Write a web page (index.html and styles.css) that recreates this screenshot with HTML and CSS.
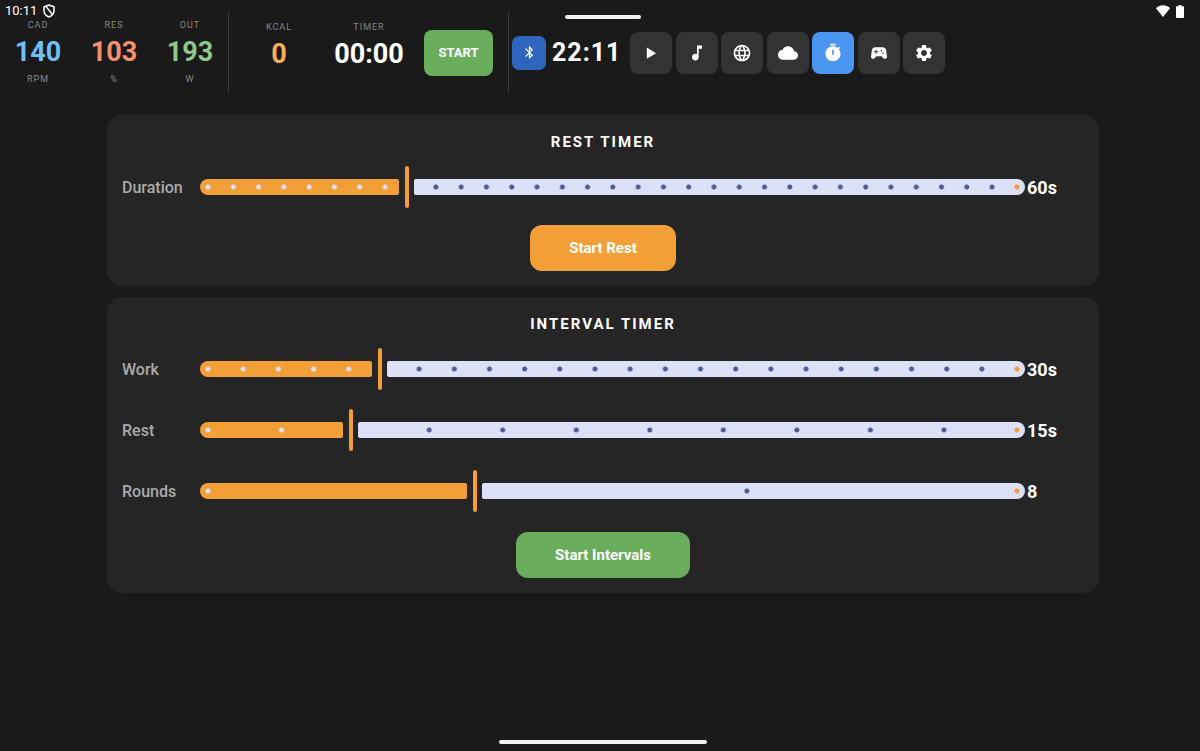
FILE: index.html
```
<!DOCTYPE html>
<html lang="en">
<head>
	<meta charset="UTF-8">
	<meta name="viewport" content="width=device-width, initial-scale=1">
	<title>Timers</title>
	<link rel="stylesheet" href="styles.css">
</head>
<body>
	<div class="status">
		<span class="status-left">
			10:11
			<svg width="12" height="14" viewBox="0 0 12 14" fill="none" stroke="#fff" stroke-width="1.5"><path d="M6 1L11 2.8V6.6C11 9.8 8.8 12 6 13C3.2 12 1 9.8 1 6.6V2.8Z"/><path d="M3 2.500L9.500 10.500"/></svg>
		</span>
		<span class="status-right">
			<svg width="14" height="12" viewBox="0 0 14 12" fill="#fff"><path d="M0 3.2C4-.6 10-.6 14 3.2L7 12Z"/></svg>
			<svg width="8" height="13" viewBox="0 0 8 13" fill="#fff"><path d="M2.5 0H5.500V1.300H7.200Q8 1.300 8 2.100V12.200Q8 13 7.200 13H.8Q0 13 0 12.200V2.100Q0 1.300 .8 1.300H2.500Z"/></svg>
		</span>
	</div>
	<div class="handle"></div>

	<header class="topbar">
		<div class="stats">
			<div class="stat cad"><span class="name">CAD</span><b>140</b><span class="name">RPM</span></div>
			<div class="stat res"><span class="name">RES</span><b>103</b><span class="name">%</span></div>
			<div class="stat out"><span class="name">OUT</span><b>193</b><span class="name">W</span></div>
		</div>
		<div class="session">
			<div class="stat kcal"><span class="name">KCAL</span><b>0</b></div>
			<div class="stat timer"><span class="name">TIMER</span><b>00:00</b></div>
			<button class="start" type="button">START</button>
		</div>
		<div class="tools">
			<button class="bluetooth" type="button" aria-label="Bluetooth">
				<svg width="15" height="15" viewBox="0 0 24 24" fill="#fff"><path d="M17.710 7.710L12 2h-1v7.590L6.410 5 5 6.410 10.590 12 5 17.590 6.410 19 11 14.410V22h1l5.710-5.710-4.300-4.290zM13 5.830l1.880 1.880L13 9.590zm1.880 10.460L13 18.170v-3.760z"/></svg>
			</button>
			<time class="clock">22:11</time>
			<nav class="apps">
				<button type="button" aria-label="Video">
					<svg width="20" height="20" viewBox="0 0 24 24" fill="#fff"><path d="M7 5.500v13.500L18 12.200z"/></svg>
				</button>
				<button type="button" aria-label="Music">
					<svg width="20" height="20" viewBox="0 0 24 24" fill="#fff"><path d="M12 3v10.550c-.59-.34-1.270-.55-2-.55-2.210 0-4 1.790-4 4s1.790 4 4 4 4-1.790 4-4V7h4V3z"/></svg>
				</button>
				<button type="button" aria-label="Web">
					<svg width="20" height="20" viewBox="0 0 24 24" fill="#fff"><path d="M11.990 2C6.470 2 2 6.480 2 12s4.470 10 9.990 10C17.520 22 22 17.520 22 12S17.520 2 11.990 2zm6.930 6h-2.950c-.32-1.250-.78-2.450-1.380-3.560 1.840.63 3.370 1.910 4.330 3.560zM12 4.040c.83 1.200 1.480 2.530 1.910 3.960h-3.820c.43-1.430 1.080-2.760 1.910-3.960zM4.260 14C4.100 13.360 4 12.690 4 12s.1-1.360.26-2h3.380c-.08.66-.14 1.320-.14 2s.06 1.340.14 2H4.260zm.82 2h2.950c.32 1.250.78 2.450 1.380 3.560-1.840-.63-3.370-1.900-4.330-3.560zm2.950-8H5.080c.96-1.660 2.490-2.930 4.330-3.560C8.810 5.550 8.350 6.750 8.030 8zM12 19.960c-.83-1.200-1.480-2.530-1.910-3.960h3.820c-.43 1.430-1.080 2.760-1.910 3.960zM14.340 14H9.660c-.09-.66-.16-1.320-.16-2s.07-1.350.16-2h4.680c.09.65.16 1.320.16 2s-.07 1.340-.16 2zm.25 5.560c.6-1.110 1.060-2.310 1.380-3.560h2.950c-.96 1.650-2.490 2.930-4.330 3.560zM16.360 14c.08-.66.14-1.320.14-2s-.06-1.340-.14-2h3.380c.16.64.26 1.310.26 2s-.1 1.360-.26 2h-3.380z"/></svg>
				</button>
				<button type="button" aria-label="Cloud">
					<svg width="20" height="20" viewBox="0 0 24 24" fill="#fff"><path d="M19.350 10.040C18.670 6.590 15.640 4 12 4 9.110 4 6.600 5.640 5.350 8.040 2.340 8.360 0 10.910 0 14c0 3.310 2.690 6 6 6h13c2.760 0 5-2.240 5-5 0-2.640-2.050-4.780-4.650-4.960z"/></svg>
				</button>
				<button class="current" type="button" aria-label="Timers" aria-current="page">
					<svg width="20" height="20" viewBox="0 0 24 24" fill="#fff"><path d="M9 1h6v2H9zM19.030 7.390l1.420-1.420c-.43-.51-.9-.99-1.410-1.410l-1.420 1.420C16.070 4.740 14.120 4 12 4c-4.970 0-9 4.030-9 9s4.020 9 9 9 9-4.030 9-9c0-2.120-.74-4.070-1.970-5.610zM13 14h-2V8h2z"/></svg>
				</button>
				<button type="button" aria-label="Games">
					<svg width="20" height="20" viewBox="0 0 24 24" fill="#fff"><path d="M21.580 16.090l-1.090-7.660C20.210 6.460 18.520 5 16.530 5H7.470C5.480 5 3.790 6.460 3.510 8.430l-1.090 7.660C2.200 17.630 3.390 19 4.940 19c.68 0 1.320-.27 1.800-.75L9 16h6l2.250 2.250c.48.48 1.130.75 1.800.75 1.560 0 2.750-1.370 2.530-2.910zM11 11H9v2H8v-2H6v-1h2V8h1v2h2zm4-1c-.55 0-1-.45-1-1s.45-1 1-1 1 .45 1 1-.45 1-1 1zm2 3c-.55 0-1-.45-1-1s.45-1 1-1 1 .45 1 1-.45 1-1 1z"/></svg>
				</button>
				<button type="button" aria-label="Settings">
					<svg width="20" height="20" viewBox="0 0 24 24" fill="#fff"><path d="M19.140 12.940c.04-.3.060-.61.060-.94 0-.32-.02-.64-.07-.94l2.030-1.580c.18-.14.23-.41.12-.61l-1.920-3.320c-.12-.22-.37-.29-.59-.22l-2.390.96c-.5-.38-1.030-.7-1.620-.94l-.36-2.540c-.04-.24-.24-.41-.48-.41h-3.840c-.24 0-.43.17-.47.41l-.36 2.540c-.59.24-1.130.57-1.620.94l-2.390-.96c-.22-.08-.47 0-.59.22L2.740 8.870c-.12.21-.08.47.12.61l2.030 1.580c-.05.3-.09.63-.09.94s.02.64.07.94l-2.030 1.580c-.18.14-.23.41-.12.61l1.920 3.320c.12.22.37.29.59.22l2.390-.96c.5.38 1.030.7 1.620.94l.36 2.540c.05.24.24.41.48.41h3.840c.24 0 .44-.17.47-.41l.36-2.540c.59-.24 1.130-.56 1.620-.94l2.390.96c.22.08.47 0 .59-.22l1.920-3.320c.12-.22.070-.47-.12-.61l-2.010-1.580zM12 15.600c-1.980 0-3.600-1.620-3.600-3.600s1.620-3.600 3.600-3.600 3.600 1.620 3.600 3.600-1.620 3.600-3.600 3.600z"/></svg>
				</button>
			</nav>
		</div>
	</header>

	<main>
		<form class="card">
			<h2>REST TIMER</h2>
			<div class="row">
				<label for="duration">Duration</label>
				<div class="slider" style="--value: 0.2455; --steps: 32">
					<div class="track"><span class="fill"></span><span class="remain"></span></div>
					<input type="range" id="duration" min="0" max="10000" value="2455" aria-valuetext="60s">
				</div>
				<output for="duration">60s</output>
			</div>
			<button class="action orange" type="button">Start Rest</button>
		</form>

		<form class="card">
			<h2>INTERVAL TIMER</h2>
			<div class="rows">
				<div class="row">
					<label for="work">Work</label>
					<div class="slider" style="--value: 0.2125; --steps: 23">
						<div class="track"><span class="fill"></span><span class="remain"></span></div>
						<input type="range" id="work" min="0" max="10000" value="2125" aria-valuetext="30s">
					</div>
					<output for="work">30s</output>
				</div>
				<div class="row">
					<label for="rest">Rest</label>
					<div class="slider" style="--value: 0.1762; --steps: 11">
						<div class="track"><span class="fill"></span><span class="remain"></span></div>
						<input type="range" id="rest" min="0" max="10000" value="1762" aria-valuetext="15s">
					</div>
					<output for="rest">15s</output>
				</div>
				<div class="row">
					<label for="rounds">Rounds</label>
					<div class="slider" style="--value: 0.3306; --steps: 3">
						<div class="track"><span class="fill"></span><span class="remain"></span></div>
						<input type="range" id="rounds" min="0" max="10000" value="3306" aria-valuetext="8">
					</div>
					<output for="rounds">8</output>
				</div>
			</div>
			<button class="action green" type="button">Start Intervals</button>
		</form>
	</main>

	<div class="bottom">
		<div class="homebar"></div>
	</div>

	<script type="text/javascript">
		// keep the coloured track in step with the thumb
		var sliders = document.querySelectorAll(".slider input");
		for (var i = 0; i < sliders.length; i++) {
			sliders[i].addEventListener("input", function() {
				this.parentNode.style.setProperty("--value", this.value / this.max);
			});
		}
	</script>
</body>
</html>
```
FILE: styles.css
```
* {
	box-sizing: border-box;
}
html, body {
	margin: 0;
	padding: 0;
}
body {
	position: relative;
	min-height: 100vh;
	display: flex;
	flex-direction: column;
	background: #1a1a1a;
	color: #fff;
	font-family: Roboto, "Liberation Sans", sans-serif;
}
button {
	border: 0;
	padding: 0;
	color: #fff;
	font-family: inherit;
	cursor: pointer;
}
svg {
	display: block;
}

/* system overlays */
.status {
	position: absolute;
	top: 3px;
	left: 5px;
	right: 16px;
	display: flex;
	justify-content: space-between;
	font-size: 13px;
	line-height: 16px;
}
.status-left, .status-right {
	display: flex;
	align-items: center;
	gap: 6px;
}
.handle {
	position: absolute;
	top: 15px;
	left: calc(50% - 35px);
	width: 76px;
	height: 4px;
	border-radius: 2px;
	background: #f1f1f1;
}
.bottom {
	margin-top: auto;
	padding: 0 101px 7px 107px;
}
.homebar {
	width: 208px;
	height: 4px;
	margin: 0 auto;
	border-radius: 2px;
	background: #f1f1f1;
}

/* top bar */
.topbar {
	display: flex;
	padding: 12px 0 22px;
}
.stats, .session, .tools {
	display: flex;
}
.stats, .session {
	height: 81px;
	border-right: 1px solid #3a3a3a;
}
.stat {
	width: 76px;
	padding-top: 7px;
	display: flex;
	flex-direction: column;
	align-items: center;
	gap: 5px;
}
.stat .name {
	color: #888;
	font-size: 9px;
	line-height: 12px;
	letter-spacing: 1px;
}
.stat b {
	font-size: 27px;
	line-height: 32px;
}
.cad b {
	color: #6fc0f5;
}
.res b {
	color: #f5906c;
}
.out b {
	color: #8fc98a;
}
.kcal b {
	color: #f7b055;
}
.session {
	padding: 0 15px 0 12px;
}
.session .stat {
	padding-top: 9px;
}
.session .timer {
	width: 104px;
}
.start {
	align-self: center;
	width: 69px;
	height: 46px;
	margin-left: 3px;
	border-radius: 8px;
	background: #69ad5d;
	font-size: 13px;
	font-weight: 700;
}
.tools {
	align-items: center;
	padding-left: 3px;
}
.bluetooth {
	display: grid;
	place-items: center;
	width: 34px;
	height: 34px;
	border-radius: 7px;
	background: #2f65bd;
}
.clock {
	width: 84px;
	padding-left: 6px;
	font-size: 25px;
	font-weight: 700;
	line-height: 32px;
	letter-spacing: 1px;
}
.apps {
	display: flex;
	justify-content: space-between;
	width: 315px;
}
.apps button {
	display: grid;
	place-items: center;
	width: 42px;
	height: 42px;
	border-radius: 8px;
	background: #333;
}
.apps .current {
	background: #4a96f0;
}

/* timer cards */
main {
	display: flex;
	flex-direction: column;
	gap: 11px;
	padding: 0 101px 0 107px;
}
.card {
	display: flex;
	flex-direction: column;
	align-items: center;
	padding: 15px;
	border-radius: 15px;
	background: #252525;
}
.card h2 {
	margin: 0 0 10px;
	font-size: 15px;
	font-weight: 700;
	line-height: 24px;
	letter-spacing: 2px;
}
.rows {
	display: flex;
	flex-direction: column;
	gap: 15px;
	width: 100%;
	margin-bottom: 3px;
}
.row {
	display: grid;
	grid-template-columns: 76px 1fr 57px;
	column-gap: 2px;
	align-items: center;
	width: 100%;
	height: 46px;
}
.row label {
	color: #aaa;
	font-size: 16px;
	font-weight: 500;
}
.row output {
	font-size: 18px;
	font-weight: 700;
}
.slider {
	container-type: inline-size;
	display: grid;
	align-items: center;
}
.track, .slider input {
	grid-area: 1 / 1;
}
.track {
	--step: calc((100cqw - 16px) / var(--steps));
	display: flex;
	gap: 15px;
	height: 16px;
}
.fill {
	width: calc((100cqw - 16px) * var(--value));
	border-radius: 8px 2px 2px 8px;
	background: radial-gradient(circle at 8px 8px, #dde1f7 2px, transparent 3px) 0 0 / var(--step) 16px #f39f38;
}
.remain {
	flex: 1;
	border-radius: 2px 8px 8px 2px;
	background:
		radial-gradient(circle at 8px 8px, #f39f38 2px, transparent 3px) right / 16px 16px no-repeat,
		linear-gradient(#dde1f7, #dde1f7) right / 16px 16px no-repeat,
		radial-gradient(circle at calc(100% - 8px) 8px, #4d5b9b 2px, transparent 3px) right / var(--step) 16px #dde1f7;
}
.slider input {
	-webkit-appearance: none;
	appearance: none;
	width: 100%;
	height: 42px;
	margin: 0;
	background: transparent;
}
/* 16px grab area, only the middle 4px is painted */
.slider input::-webkit-slider-thumb {
	-webkit-appearance: none;
	width: 16px;
	height: 42px;
	border: solid transparent;
	border-width: 0 6px;
	border-radius: 8px / 2px;
	background: #f39f38;
	background-clip: padding-box;
}
.action {
	height: 46px;
	margin-top: 15px;
	padding: 0 39px;
	border-radius: 12px;
	font-size: 15px;
	font-weight: 700;
}
.orange {
	background: #f39f38;
}
.green {
	background: #69ad5d;
}
```
